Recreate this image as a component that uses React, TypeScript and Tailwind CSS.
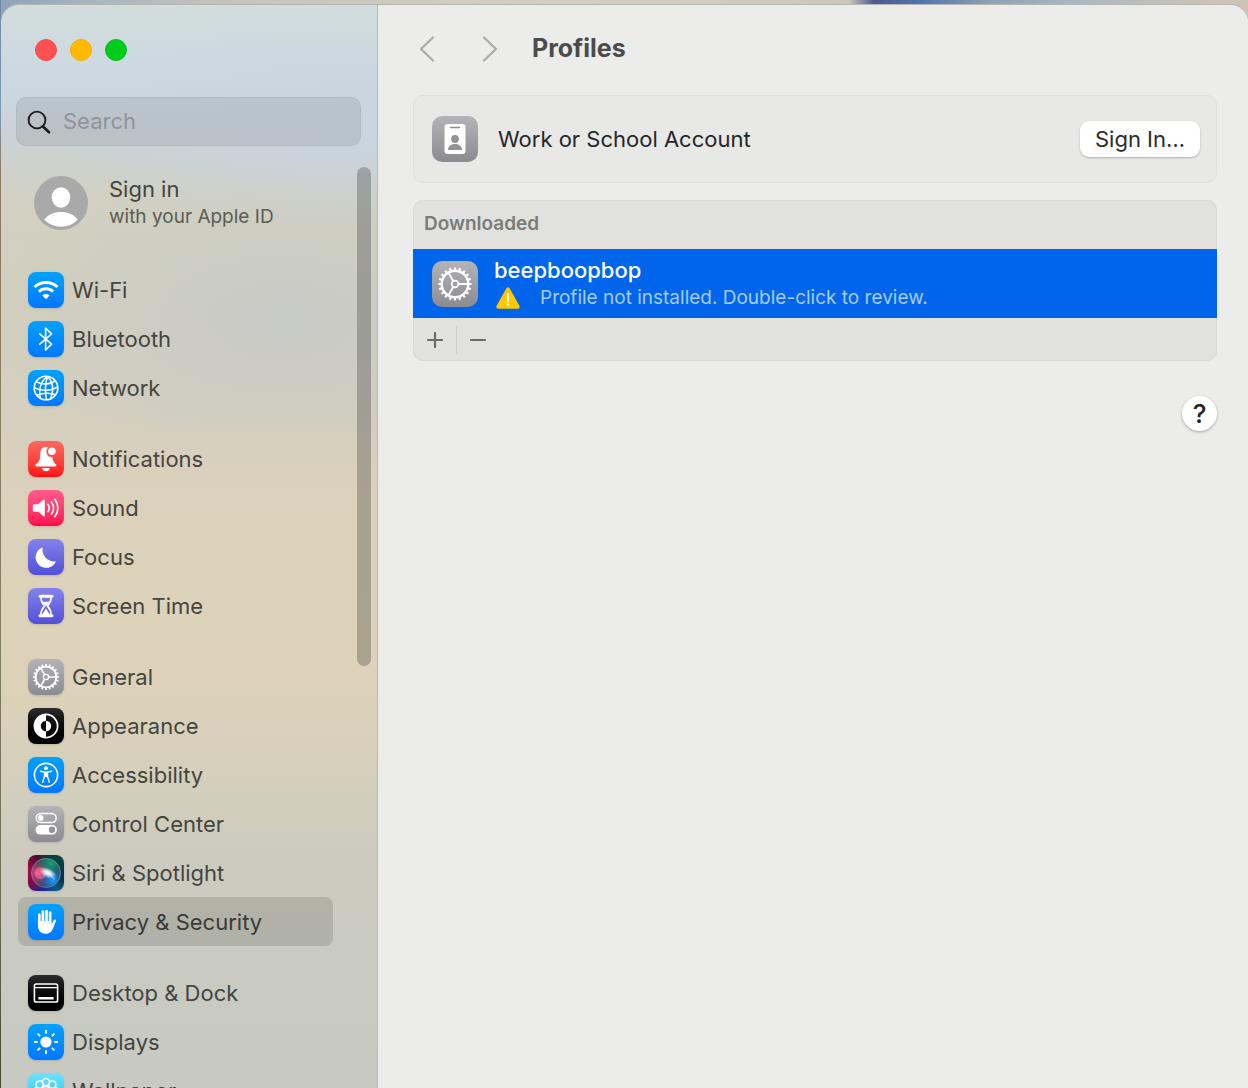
import React from 'react';

interface NavItem {
  label: string;
  tile: string;
  glyph: React.ReactNode;
}

const BLUE = 'bg-linear-to-b from-[#00a2ff] to-[#0077ff]';
const GRAY = 'bg-linear-to-b from-[#b4b3b8] to-[#8c8b91]';
const INDIGO = 'bg-linear-to-b from-[#8482ec] to-[#534fd6]';
const BLACK = 'bg-linear-to-b from-[#2b2b2b] to-[#000000]';

const TEETH = Array.from({ length: 20 }, (_, i) => i * 18);
const RAYS = [0, 45, 90, 135, 180, 225, 270, 315];

const Gear = ({ className }: { className: string }) => (
  <svg viewBox="0 0 36 36" className={className} fill="none" stroke="white" aria-hidden="true">
    <circle cx="18" cy="18" r="10.4" strokeWidth="1.9" />
    <circle cx="18" cy="18" r="2.6" strokeWidth="1.4" />
    <path d="M20.6 18H28.4M16.7 15.8L12.8 9M16.7 20.2L12.8 27" strokeWidth="1.6" />
    {TEETH.map((a) => (
      <path key={a} d="M18 7.4V5" strokeWidth="1.7" transform={`rotate(${a} 18 18)`} />
    ))}
  </svg>
);

const Glyph = ({ children }: { children: React.ReactNode }) => (
  <svg viewBox="0 0 36 36" className="size-9" fill="none" stroke="white" aria-hidden="true">
    {children}
  </svg>
);

const groups: NavItem[][] = [
  [
    {
      label: 'Wi-Fi',
      tile: BLUE,
      glyph: (
        <Glyph>
          <path d="M6.6 15a16.4 16.4 0 0 1 22.800 0" strokeWidth="3" />
          <path d="M10.9 19.6a10.2 10.2 0 0 1 14.2 0" strokeWidth="2.9" />
          <path d="M18 27.2l-3.6-3.7a5.2 5.2 0 0 1 7.2 0z" fill="white" stroke="none" />
        </Glyph>
      ),
    },
    {
      label: 'Bluetooth',
      tile: BLUE,
      glyph: (
        <Glyph>
          <path d="M11.8 12.8L23.6 23.2L17.6 29V7L23.6 12.8L11.8 23.2" strokeWidth="1.6" strokeLinejoin="round" strokeLinecap="round" />
        </Glyph>
      ),
    },
    {
      label: 'Network',
      tile: BLUE,
      glyph: (
        <Glyph>
          <circle cx="18" cy="18" r="11.8" strokeWidth="1.6" />
          <path
            d="M19.6 6.3C12.8 11 10.6 19 12.4 28.4M19.6 6.3C17 13 17 21 18.4 29.8M19.6 6.3C25 12 26 20 22.6 28.6M8.2 11.6C14 15.2 22 15 27.2 10.6M6.3 17.6C13 21.6 23 21 29.7 16.8M8.6 25.2C14.6 23 22 22.6 27.6 24.8"
            strokeWidth="1.5"
          />
        </Glyph>
      ),
    },
  ],
  [
    {
      label: 'Notifications',
      tile: 'bg-linear-to-b from-[#ff6560] to-[#ff0812]',
      glyph: (
        <Glyph>
          <path
            d="M20.4 6.6a5.2 5.2 0 0 0-8 4.600c-.4 7.400-.8 9.800-4.400 11.800-1 .8-.7 2.400.5 2.400h18.800c1.200 0 1.500-1.600.5-2.400-2.200-1.400-3-3.600-3.400-7a5.300 5.300 0 0 1-4-9.400z"
            fill="white"
            stroke="none"
          />
          <path d="M14.400 27h7.200a3.600 3.200 0 0 1-7.200 0z" fill="white" stroke="none" />
          <circle cx="23.900" cy="10.200" r="3.800" fill="white" stroke="none" />
        </Glyph>
      ),
    },
    {
      label: 'Sound',
      tile: 'bg-linear-to-b from-[#ff5a8c] to-[#ff004f]',
      glyph: (
        <Glyph>
          <path d="M6 14.2h4.2L15.6 9.7q1.2-.8 1.2.6v15.4q0 1.4-1.2.6L10.2 21.8H6q-1.2 0-1.2-1.2v-5.2q0-1.2 1.2-1.2z" fill="white" stroke="none" />
          <path d="M20 14.5a6 6 0 0 1 0 7M23.4 11.9a10 10 0 0 1 0 12.2M27 9.5a14 14 0 0 1 0 17" strokeWidth="1.7" strokeLinecap="round" />
        </Glyph>
      ),
    },
    {
      label: 'Focus',
      tile: INDIGO,
      glyph: (
        <Glyph>
          <path d="M14.8 8.200a11.600 11.600 0 0 0 13.200 14.100a10.600 10.600 0 1 1-13.200-14.100z" fill="white" stroke="none" />
        </Glyph>
      ),
    },
    {
      label: 'Screen Time',
      tile: INDIGO,
      glyph: (
        <Glyph>
          <path d="M12 8.200H24M12 27.800H24" strokeWidth="3" strokeLinecap="round" />
          <path d="M12.900 9.400c0 4.600 1.600 6.200 3.700 8.600-2.100 2.400-3.700 4-3.700 8.600M23.100 9.400c0 4.600-1.600 6.200-3.700 8.600 2.100 2.400 3.700 4 3.700 8.600" strokeWidth="1.700" />
          <path d="M14.600 13.800h6.800L18 18.200zM18 20.500l4 6.500h-8z" fill="white" stroke="none" />
        </Glyph>
      ),
    },
  ],
  [
    { label: 'General', tile: GRAY, glyph: <Gear className="size-9" /> },
    {
      label: 'Appearance',
      tile: BLACK,
      glyph: (
        <Glyph>
          <circle cx="18" cy="18" r="11.6" strokeWidth="1.7" />
          <path d="M18 6.4a11.6 11.6 0 0 0 0 23.2v-6.4a5.2 5.2 0 0 1 0-10.4z" fill="white" stroke="none" />
          <path d="M18 12.8a5.2 5.2 0 0 1 0 10.4z" fill="white" stroke="none" />
        </Glyph>
      ),
    },
    {
      label: 'Accessibility',
      tile: BLUE,
      glyph: (
        <Glyph>
          <circle cx="18" cy="18" r="11.6" strokeWidth="1.6" />
          <circle cx="18" cy="11.2" r="1.9" fill="white" stroke="none" />
          <path d="M12.4 14.3l4.1.8v4.3l-1.9 6M23.6 14.3l-4.1.8v4.3l1.9 6" strokeWidth="1.4" strokeLinecap="round" />
          <path d="M16.4 14.6h3.2v5.4h-3.2z" fill="white" stroke="none" />
        </Glyph>
      ),
    },
    {
      label: 'Control Center',
      tile: GRAY,
      glyph: (
        <Glyph>
          <rect x="8.2" y="7.6" width="20" height="8.8" rx="4.4" strokeWidth="1.5" />
          <circle cx="12.6" cy="12" r="2.9" fill="white" stroke="none" />
          <rect x="7.5" y="19" width="21.4" height="9.6" rx="4.8" fill="white" stroke="none" />
          <circle cx="24" cy="23.8" r="3.2" fill="#949398" stroke="none" />
        </Glyph>
      ),
    },
    {
      label: 'Siri & Spotlight',
      tile: 'bg-[conic-gradient(from_0deg,#0a3a38,#04463f_12%,#06304a_30%,#0a5a80_40%,#1a2a9a_52%,#7a0a50_65%,#a00a48_80%,#4a1030_92%,#0a3a38)]',
      glyph: (
        <Glyph>
          <defs>
            <radialGradient id="siri-pink" cx="0.22" cy="0.5" r="0.48">
              <stop offset="0" stopColor="#ff3f7c" />
              <stop offset="1" stopColor="#d0206a" stopOpacity="0" />
            </radialGradient>
            <radialGradient id="siri-green" cx="0.66" cy="0.2" r="0.5">
              <stop offset="0" stopColor="#12a577" />
              <stop offset="1" stopColor="#0c7a62" stopOpacity="0" />
            </radialGradient>
            <radialGradient id="siri-blue" cx="0.72" cy="0.76" r="0.46">
              <stop offset="0" stopColor="#12a2ff" />
              <stop offset="1" stopColor="#1560e0" stopOpacity="0" />
            </radialGradient>
            <radialGradient id="siri-core" cx="0.5" cy="0.5" r="0.5">
              <stop offset="0" stopColor="#ffffff" />
              <stop offset="0.4" stopColor="#f4ffff" stopOpacity="0.8" />
              <stop offset="1" stopColor="#ffffff" stopOpacity="0" />
            </radialGradient>
          </defs>
          <circle cx="18" cy="18" r="15" fill="#2b4a58" stroke="none" />
          <circle cx="18" cy="18" r="15" fill="url(#siri-pink)" stroke="none" />
          <circle cx="18" cy="18" r="15" fill="url(#siri-green)" stroke="none" />
          <circle cx="18" cy="18" r="15" fill="url(#siri-blue)" stroke="none" />
          <circle cx="12.5" cy="18" r="6" fill="#ff86ac" fillOpacity="0.45" stroke="none" />
          <circle cx="18" cy="18" r="14.4" stroke="#b88aa8" strokeOpacity="0.6" strokeWidth="0.9" />
          <ellipse cx="20" cy="18" rx="9" ry="5" fill="url(#siri-core)" stroke="none" transform="rotate(25 20 18)" />
          <path d="M20 18L27 24.500" strokeOpacity="0.6" strokeWidth="1" />
        </Glyph>
      ),
    },
    {
      label: 'Privacy & Security',
      tile: BLUE,
      glyph: (
        <Glyph>
          <path d="M11.3 10.6V21M14.9 7.6V19M18.5 7V19M22.1 8.6V19" strokeWidth="2.7" strokeLinecap="round" />
          <path
            d="M9.95 17h13.500v3.200l2.500-4.200c.8-1.200 2.500-.5 2 .9l-2.600 6.900c-1.400 3.800-3.600 6-7.500 6-4.900 0-7.900-3-7.900-8z"
            fill="white"
            stroke="none"
          />
        </Glyph>
      ),
    },
  ],
  [
    {
      label: 'Desktop & Dock',
      tile: BLACK,
      glyph: (
        <Glyph>
          <rect x="6.4" y="9" width="23.2" height="18" rx="1.8" strokeWidth="1.6" />
          <path d="M6.4 12.6H29.6" strokeWidth="1.2" />
          <path d="M10.4 23.2H25.6" strokeWidth="2.6" />
        </Glyph>
      ),
    },
    {
      label: 'Displays',
      tile: BLUE,
      glyph: (
        <Glyph>
          <circle cx="18" cy="18" r="5.6" fill="white" stroke="none" />
          {RAYS.map((a) => (
            <path key={a} d="M18 9V6.8" strokeWidth="1.9" strokeLinecap="round" transform={`rotate(${a} 18 18)`} />
          ))}
        </Glyph>
      ),
    },
    {
      label: 'Wallpaper',
      tile: 'bg-linear-to-b from-[#6ce4ff] to-[#21b5e8]',
      glyph: (
        <Glyph>
          {RAYS.map((a) => (
            <circle key={a} cx="18" cy="9" r="3.6" strokeWidth="1.5" transform={`rotate(${a} 18 18)`} />
          ))}
          <circle cx="18" cy="18" r="4.4" strokeWidth="1.5" />
        </Glyph>
      ),
    },
  ],
];

const Sidebar = () => (
  <aside className="relative flex w-[377px] shrink-0 flex-col overflow-hidden border-r border-[#b9bab6] bg-[radial-gradient(ellipse_300px_150px_at_75%_29%,#c8cac6_0%,transparent_100%),radial-gradient(ellipse_330px_110px_at_100%_11%,#c9d4e0_0%,transparent_100%),linear-gradient(to_bottom,#d2dddd_0%,#ccd8e1_7%,#cad3d9_11%,#d1d0c2_18%,#d2d0be_26%,#d5cfbe_38%,#dcd2bc_46%,#ddd2b9_62%,#d6d0bb_70%,#cccbbf_79%,#c9cac1_88%,#c8c9c2_100%)] text-[#454540]">
    <div className="flex gap-[13px] pt-[34px] pl-[34px]">
      <button aria-label="Close" className="size-[22px] rounded-full border border-[#f04c4e] bg-[#ff5152]" />
      <button aria-label="Minimize" className="size-[22px] rounded-full border border-[#f2ae00] bg-[#ffb900]" />
      <button aria-label="Zoom" className="size-[22px] rounded-full border border-[#04c01a] bg-[#00cc1b]" />
    </div>

    <label className="mt-9 mr-4 ml-[15px] flex h-[49px] shrink-0 items-center gap-3 rounded-[10px] border border-black/5 bg-black/8 px-[10px]">
      <svg viewBox="0 0 24 24" className="size-6" fill="none" stroke="#1c1c1c" strokeLinecap="round" aria-hidden="true">
        <circle cx="10" cy="10" r="8.4" strokeWidth="1.9" />
        <path d="M16 16.5L22 22.3" strokeWidth="2.6" />
      </svg>
      <input
        type="search"
        aria-label="Search"
        placeholder="Search"
        className="min-w-0 flex-1 bg-transparent text-[22px] text-[#2b2b2b] outline-none placeholder:text-[#8f9496]"
      />
    </label>

    <button className="mt-[29px] ml-[33px] flex items-center gap-[21px] text-left">
      <svg viewBox="0 0 54 54" className="size-[54px]" aria-hidden="true">
        <circle cx="27" cy="27" r="27" fill="#a9a9a9" />
        <ellipse cx="27" cy="21.5" rx="9.3" ry="10.2" fill="white" />
        <path d="M10.2 43.8C14 38.5 20 36 27 36s13 2.5 16.8 7.8A24 24 0 0 1 10.2 43.8z" fill="white" />
      </svg>
      <span className="flex flex-col">
        <span className="text-[22px] leading-[28px]">Sign in</span>
        <span className="text-[19px] leading-[28px] text-[#5d5d52]">with your Apple ID</span>
      </span>
    </button>

    <nav className="mt-[34px] flex flex-col gap-[22px] pr-11 pl-[17px]">
      {groups.map((items, i) => (
        <ul key={i}>
          {items.map((item) => (
            <li key={item.label}>
              <a
                href="#"
                className={`flex h-[49px] items-center gap-2 rounded-lg px-[10px] text-[22px] whitespace-nowrap ${
                  item.label === 'Privacy & Security' ? 'bg-black/12 text-[#3a3a38]' : ''
                }`}
              >
                <span className={`size-9 shrink-0 overflow-hidden rounded-lg shadow-sm ${item.tile}`}>{item.glyph}</span>
                <span className="pt-0.5">{item.label}</span>
              </a>
            </li>
          ))}
        </ul>
      ))}
    </nav>

    {/* scroll thumb floats over the list */}
    <div className="absolute top-[162px] right-1.5 h-[499px] w-3.5 rounded-full bg-black/23" />
  </aside>
);

const Profiles = () => (
  <main className="min-w-0 flex-1 bg-[#ececeb] pr-[31px] pl-[35px]">
    <header className="mb-0.5 flex h-[88px] items-center text-[#acacab]">
      <button aria-label="Back" className="flex w-7 justify-center">
        <svg viewBox="0 0 16 26" className="h-[26px] w-4" fill="none" stroke="currentColor" strokeWidth="2.4" strokeLinecap="round" strokeLinejoin="round">
          <path d="M14 1.5L2 13L14 24.5" />
        </svg>
      </button>
      <button aria-label="Forward" className="ml-[35px] flex w-7 justify-center">
        <svg viewBox="0 0 16 26" className="h-[26px] w-4" fill="none" stroke="currentColor" strokeWidth="2.4" strokeLinecap="round" strokeLinejoin="round">
          <path d="M2 1.5L14 13L2 24.5" />
        </svg>
      </button>
      <h1 className="ml-7 text-[25px] font-bold text-[#4b4b4b]">Profiles</h1>
    </header>

    <section className="flex h-[88px] items-center rounded-[10px] border border-[#dfdfde] bg-[#e8e8e6] pr-4 pl-[18px]">
      <svg viewBox="0 0 46 46" className="size-[46px] shrink-0" aria-hidden="true">
        <defs>
          <linearGradient id="badge-tile" x1="0" y1="0" x2="0" y2="1">
            <stop offset="0" stopColor="#b4b3b8" />
            <stop offset="1" stopColor="#8c8b91" />
          </linearGradient>
        </defs>
        <rect width="46" height="46" rx="10" fill="url(#badge-tile)" />
        <rect x="12.5" y="8" width="21" height="30" rx="3" fill="white" />
        <path d="M18.5 11.5h9" stroke="#8f8e93" strokeWidth="1.5" strokeLinecap="round" />
        <circle cx="23" cy="23" r="3.9" fill="#939297" />
        <path d="M15.8 34c.6-4 3.4-6 7.2-6s6.6 2 7.2 6z" fill="#939297" />
      </svg>
      <h2 className="ml-5 flex-1 text-[22px] text-[#262626]">Work or School Account</h2>
      <button className="h-9 w-[120px] rounded-[9px] bg-white text-[22px] leading-none text-[#2b2b2b] shadow-[0_1px_2px_rgba(0,0,0,0.25)]">Sign In…</button>
    </section>

    <section className="mt-[17px] overflow-hidden rounded-[10px] bg-[#e1e1df] shadow-[inset_0_0_0_1px_#dadad8]">
      <h2 className="flex h-[49px] items-center pl-[11px] text-[19px] font-semibold text-[#7b7b79]">Downloaded</h2>
      <button className="flex h-[69px] w-full items-center bg-[#0065ea] pl-[19px] text-left">
        <span className="size-[46px] shrink-0 rounded-[10px] bg-linear-to-b from-[#b4b3b8] to-[#8c8b91]">
          <Gear className="size-[46px]" />
        </span>
        <span className="ml-4 flex flex-col">
          <span className="text-[22px] leading-[28px] font-medium text-white">beepboopbop</span>
          <span className="flex items-center gap-5 pl-0.5 text-[19px] leading-[28px] text-[#a3ccf8]">
            <svg viewBox="0 0 24 22" className="h-[22px] w-6 shrink-0" aria-hidden="true">
              <path d="M10.3 1.5q1.7-2.4 3.4 0L23.4 18.8q1 2.7-1.8 2.9H2.4Q-.4 21.5.6 18.8z" fill="#ffc800" />
              <path d="M12 7v7" stroke="white" strokeWidth="2" strokeLinecap="round" />
              <circle cx="12" cy="17.4" r="1.2" fill="white" />
            </svg>
            Profile not installed. Double-click to review.
          </span>
        </span>
      </button>
      <div className="flex h-[43px] items-center pl-px text-[#6b6b69]">
        <button aria-label="Add profile" className="flex h-full w-[42px] items-center justify-center">
          <svg viewBox="0 0 16 16" className="size-4" stroke="currentColor" strokeWidth="2.2" strokeLinecap="round">
            <path d="M8 1v14M1 8h14" />
          </svg>
        </button>
        <span className="h-7 w-px bg-[#cececc]" />
        <button aria-label="Remove profile" className="flex h-full w-[42px] items-center justify-center">
          <svg viewBox="0 0 16 16" className="size-4" stroke="currentColor" strokeWidth="2.2" strokeLinecap="round">
            <path d="M1 8h14" />
          </svg>
        </button>
      </div>
    </section>

    <div className="mt-[35px] flex justify-end">
      <button aria-label="Help" className="flex size-[35px] items-center justify-center rounded-full bg-white text-[26px] leading-none font-medium text-[#262626] shadow-[0_1px_3px_rgba(0,0,0,0.3)]">?</button>
    </div>
  </main>
);

export default function App() {
  return (
    <div className="flex h-screen flex-col overflow-hidden pt-1 pl-px font-[Inter,'Liberation_Sans',sans-serif] [background:linear-gradient(to_bottom,#6f87a8_0%,#7d9bb2_10%,#8a7a62_16%,#858062_55%,#6f7258_80%,#3f4a30_100%)_0_0/1px_100%_no-repeat,linear-gradient(to_right,#8fa3ba_0%,#a9b7c0_8%,#c5c4bd_18%,#d6cfc0_45%,#cfc6bd_68%,#4f5a92_70%,#4f78ae_74%,#8f9fb5_79%,#a9b8c2_86%,#cdc3b7_97%)]">
      <div className="flex min-h-0 flex-1 overflow-hidden rounded-t-[18px] border-t border-[#b5b5b0]">
        <Sidebar />
        <Profiles />
      </div>
    </div>
  );
}
